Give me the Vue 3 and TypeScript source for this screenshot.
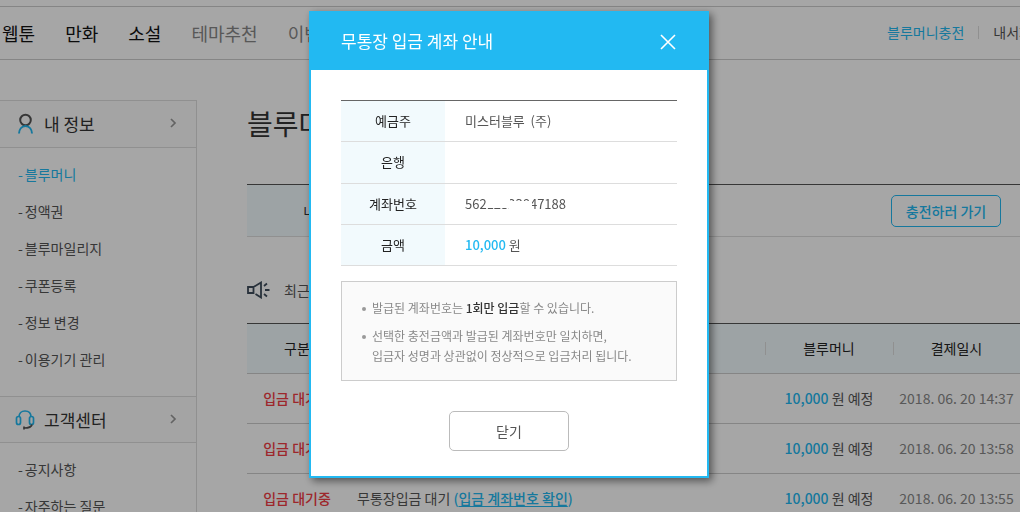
<script setup lang="ts">
import { ref } from 'vue'

interface NavItem { label: string; strong: boolean }
interface Payment { status: string; amount: string; date: string }

const navItems: NavItem[] = [
  { label: '웹툰', strong: true },
  { label: '만화', strong: true },
  { label: '소설', strong: true },
  { label: '테마추천', strong: false },
  { label: '이벤트', strong: false },
]
const infoLinks: string[] = ['블루머니', '정액권', '블루마일리지', '쿠폰등록', '정보 변경', '이용기기 관리']
const helpLinks: string[] = ['공지사항', '자주하는 질문']
const payments: Payment[] = [
  { status: '입금 대기중', amount: '10,000', date: '2018. 06. 20 14:37' },
  { status: '입금 대기중', amount: '10,000', date: '2018. 06. 20 13:58' },
  { status: '입금 대기중', amount: '10,000', date: '2018. 06. 20 13:55' },
]
const open = ref<boolean>(true)
</script>

<template>
  <div class="page">
    <header class="topbar">
      <nav class="nav">
        <a v-for="item in navItems" :key="item.label" href="#" :class="{ strong: item.strong }">{{ item.label }}</a>
      </nav>
      <div class="util">
        <a href="#" class="charge">블루머니충전</a>
        <span class="bar"></span>
        <a href="#">내서재</a>
      </div>
    </header>

    <div class="body">
      <aside class="side">
        <h2 class="side-title">
          <svg width="20" height="22" viewBox="0 0 20 22" fill="none" stroke-width="2">
            <circle cx="10.500" cy="7" r="5.300" stroke="#555" />
            <path d="M4 20.500c.2-4 2.500-7.500 6.500-7.500s6.300 3.500 6.500 7.500" stroke="#22b9f2" />
          </svg>
          <a href="#">내 정보</a>
          <svg class="chev" width="8" height="10" viewBox="0 0 8 10" fill="none" stroke="#999" stroke-width="1.700"><path d="M2 1l4 4-4 4" /></svg>
        </h2>
        <ul class="side-list">
          <li v-for="(link, i) in infoLinks" :key="link"><a href="#" :class="{ on: i === 0 }"><span>-</span>{{ link }}</a></li>
        </ul>
        <h2 class="side-title">
          <svg width="20" height="22" viewBox="0 0 20 22" fill="none" stroke-width="1.700">
            <path d="M4 8C4 4 6.500 2 10 2s6 2 6 6" stroke="#22b9f2" />
            <rect x="1.500" y="7.500" width="4" height="8" rx="2" stroke="#22b9f2" />
            <rect x="14.500" y="7.500" width="4" height="8" rx="2" stroke="#22b9f2" />
            <path d="M17 15.500c-.5 2.500-3 3.500-8 3.500M9 17.500v3" stroke="#555" />
          </svg>
          <a href="#">고객센터</a>
          <svg class="chev" width="8" height="10" viewBox="0 0 8 10" fill="none" stroke="#999" stroke-width="1.700"><path d="M2 1l4 4-4 4" /></svg>
        </h2>
        <ul class="side-list">
          <li v-for="link in helpLinks" :key="link"><a href="#"><span>-</span>{{ link }}</a></li>
        </ul>
      </aside>

      <main class="main">
        <h1>블루머니</h1>
        <div class="balance">
          <div class="balance-label">내 블루머니</div>
          <button type="button" class="charge-btn">충전하러 가기</button>
        </div>
        <p class="recent">
          <svg width="23" height="18" viewBox="0 0 23 18" fill="none" stroke="#3e4c5b" stroke-width="1.800">
            <path d="M1 6h5.500v6H1zM6.500 6L14 1.500v15L8.500 13M17 5l3-2.500M18 9h4.500M17 13l3 2.500" />
          </svg>
          최근 충전내역
        </p>
        <table class="history">
          <colgroup><col class="c-kind"><col><col class="c-money"><col class="c-date"></colgroup>
          <thead>
            <tr><th>구분</th><th>내용</th><th>블루머니</th><th>결제일시</th></tr>
          </thead>
          <tbody>
            <tr v-for="p in payments" :key="p.date">
              <td class="status">{{ p.status }}</td>
              <td class="desc">무통장입금 대기 <a href="#">(<u>입금 계좌번호 확인</u>)</a></td>
              <td class="money"><b>{{ p.amount }}</b> 원 예정</td>
              <td class="date">{{ p.date }}</td>
            </tr>
          </tbody>
        </table>
      </main>
    </div>

    <div v-if="open" class="overlay">
      <section class="modal" role="dialog" aria-labelledby="modal-title">
        <header class="modal-head">
          <h2 id="modal-title">무통장 입금 계좌 안내</h2>
          <button type="button" class="x" aria-label="닫기" @click="open = false">
            <svg width="16" height="16" viewBox="0 0 16 16" stroke="#fff" stroke-width="1.600"><path d="M1 1l14 14M15 1L1 15" /></svg>
          </button>
        </header>
        <div class="modal-body">
          <table class="account">
            <tbody>
              <tr><th scope="row">예금주</th><td>미스터블루&nbsp; (주)</td></tr>
              <tr><th scope="row">은행</th><td></td></tr>
              <tr><th scope="row">계좌번호</th><td><span class="masked">56212323847188<i class="mask low"></i><i class="mask high"></i></span></td></tr>
              <tr><th scope="row">금액</th><td><b>10,000</b> 원</td></tr>
            </tbody>
          </table>
          <ul class="notice">
            <li>발급된 계좌번호는 <strong>1회만 입금</strong>할 수 있습니다.</li>
            <li>선택한 충전금액과 발급된 계좌번호만 일치하면,<br>입금자 성명과 상관없이 정상적으로 입금처리 됩니다.</li>
          </ul>
          <button type="button" class="close" @click="open = false">닫기</button>
        </div>
      </section>
    </div>
  </div>
</template>

<style>
body { margin: 0; overflow: hidden; }
</style>

<style scoped>
* { box-sizing: border-box; }
.page {
  height: 100vh;
  overflow: hidden;
  padding-top: 6px;
  background: #fff;
  color: #555;
  font: 14px/20px "Noto Sans CJK KR", sans-serif;
}
a { color: inherit; text-decoration: none; }
h1, h2, p, ul { margin: 0; padding: 0; font-weight: 400; list-style: none; }
button { font: inherit; cursor: pointer; padding: 0; }
table { width: 100%; border-collapse: collapse; table-layout: fixed; }

.topbar {
  display: flex;
  justify-content: space-between;
  align-items: center;
  height: 54px;
  border-top: 1px solid #ccc;
  border-bottom: 1px solid #ccc;
  white-space: nowrap;
}
.nav { display: flex; gap: 30px; padding-left: 2px; font-size: 18px; color: #888; }
.nav .strong { color: #111; }
.util { display: flex; align-items: center; gap: 14px; margin-right: -12px; padding-bottom: 2px; }
.charge { color: #22b9f2; }
.bar { width: 1px; height: 13px; background: #ddd; }

.body { display: flex; align-items: flex-start; gap: 50px; padding-top: 40px; }
.side { flex: 0 0 197px; border: 1px solid #ddd; border-left: 0; }
.side-title {
  display: flex;
  align-items: center;
  gap: 9px;
  height: 47px;
  padding: 0 19px 0 15px;
  border-bottom: 1px solid #ddd;
  background: #fcfcfc;
  color: #333;
  font-size: 17px;
  line-height: 24px;
}
.side-title:not(:first-child) { border-top: 1px solid #ddd; }
.chev { margin: 0 0 2px auto; }
.side-list { padding: 8px 0 18px 18px; line-height: 37px; }
.side-list a { display: flex; gap: 2px; }
.side-list .on { color: #22b9f2; }

.main { flex: 1; min-width: 0; }
h1 { padding: 3px 0 41px; color: #333; font-size: 28px; line-height: 40px; }
.balance {
  display: flex;
  align-items: stretch;
  justify-content: space-between;
  height: 53px;
  padding-right: 19px;
  border-top: 1px solid #555;
  border-bottom: 1px solid #ddd;
}
.balance-label {
  display: flex;
  align-items: center;
  justify-content: center;
  width: 180px;
  background: #f2fafd;
  color: #333;
}
.charge-btn {
  align-self: center;
  width: 110px;
  height: 32px;
  border: 1px solid #22b9f2;
  border-radius: 5px;
  background: #fff;
  color: #22b9f2;
  font-weight: 500;
}
.recent { display: flex; align-items: center; gap: 14px; padding: 43px 0 23px; }

.history { border-top: 1px solid #555; white-space: nowrap; }
.c-kind { width: 100px; }
.c-money { width: 128px; }
.c-date { width: 127px; }
.history th, .history td { height: 50px; padding: 0 0 2px; border-bottom: 1px solid #ccc; text-align: center; }
.history th {
  background: linear-gradient(#ddd, #ddd) left center / 1px 13px no-repeat, #f2fafd;
  color: #222;
  font-weight: 400;
}
.history th:first-child { background: #f2fafd; }
.history .status { color: #f23c44; font-weight: 500; }
.history .desc { padding-left: 10px; text-align: left; }
.desc a { color: #22b9f2; font-weight: 500; }
.desc u { text-underline-offset: 2px; }
b { color: #22b9f2; font-weight: 500; }
.date { color: #888; }

.overlay {
  position: fixed;
  inset: 0;
  display: flex;
  align-items: flex-start;
  justify-content: center;
  padding: 11px 2px 0 0;
  background: rgba(0, 0, 0, 0.35);
}
.modal {
  width: 400px;
  border: 2px solid #22b9f2;
  background: #fff;
  box-shadow: 3px 3px 8px rgba(0, 0, 0, 0.5);
}
.modal-head {
  display: flex;
  align-items: center;
  justify-content: space-between;
  height: 57px;
  padding: 0 31px 0 30px;
  background: #22b9f2;
  color: #fff;
}
.modal-head h2 { padding-bottom: 2px; font-size: 17px; line-height: 24px; }
.x { display: flex; border: 0; background: none; }
.modal-body { padding: 30px 30px 25px; }
.account { height: 166px; border-top: 1px solid #666; font-size: 13px; }
.account th, .account td { padding: 0; border-bottom: 1px solid #ddd; }
.account th { width: 104px; background: #f2fafd; color: #222; font-weight: 400; }
.account td { padding-left: 20px; }
.masked { position: relative; display: inline-block; }
.mask { position: absolute; background: #fff; }
.mask.low { left: 22px; right: 56px; top: 2px; height: 12px; }
.mask.high { left: 44px; right: 34px; top: 7px; height: 10px; }
.notice {
  display: grid;
  gap: 8px;
  margin-top: 15px;
  padding: 16px 20px 14px;
  border: 1px solid #ccc;
  background: #fafafa;
  color: #888;
  font-size: 12px;
}
.notice li { position: relative; padding-left: 10px; white-space: nowrap; }
.notice li::before {
  content: "";
  position: absolute;
  left: 0;
  top: 9px;
  width: 4px;
  height: 4px;
  border-radius: 50%;
  background: #999;
}
.notice strong { color: #333; font-weight: 500; }
.close {
  display: block;
  width: 120px;
  height: 40px;
  margin: 30px auto 0;
  border: 1px solid #bbb;
  border-radius: 5px;
  background: #fff;
  color: #555;
}
</style>
